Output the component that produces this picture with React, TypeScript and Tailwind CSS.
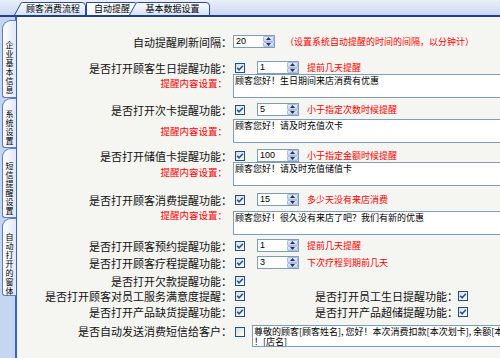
import React from "react";

const cjk = "font-['Noto_Sans_CJK_SC','Noto_Sans',sans-serif]";

function TopTab({
  w,
  label,
  slant,
  selected,
  id,
  className = "",
}: {
  w: number;
  label: string;
  slant: boolean;
  selected?: boolean;
  id: string;
  className?: string;
}) {
  const d = slant
    ? `M0.5 13 L7 1.2 Q7.6 0.5 8.6 0.5 L${w - 4} 0.5 Q${w - 0.5} 0.5 ${w - 0.5} 4 L${w - 0.5} 13`
    : `M0.5 13 L0.5 0.5 L${w - 4} 0.5 Q${w - 0.5} 0.5 ${w - 0.5} 4 L${w - 0.5} 13`;
  return (
    <div className={`relative h-[13px] shrink-0 ${className}`} style={{ width: w }}>
      <svg className="absolute inset-0" width={w} height={13} viewBox={`0 0 ${w} 13`}>
        <defs>
          <linearGradient id={id} x1="0" y1="0" x2="0" y2="1">
            <stop offset="0" stopColor={selected ? "#ffffff" : "#fbfcff"} />
            <stop offset="1" stopColor={selected ? "#f3f6fc" : "#d7e2f4"} />
          </linearGradient>
        </defs>
        <path d={d} fill={`url(#${id})`} stroke="#2b4a98" strokeWidth="1" />
      </svg>
      <div
        className={`relative flex h-full items-center justify-center text-[9px] leading-[13px] text-black ${
          slant ? "pl-[6px]" : ""
        }`}
      >
        {label}
      </div>
    </div>
  );
}

function LeftTab({ label, h, pt }: { label: string; h: number; pt: number }) {
  return (
    <div
      className="ml-[2px] flex w-[14px] shrink-0 flex-col items-center rounded-tl-[9px] rounded-bl-[3px] border-y border-l border-[#5b7ec6] bg-gradient-to-r from-[#ffffff] to-[#dfe8f7]"
      style={{ height: h, paddingTop: pt }}
    >
      <span className="block w-[9px] break-all text-center text-[8px] leading-[9px] text-black">{label}</span>
    </div>
  );
}

function Label({ children, className = "" }: { children: React.ReactNode; className?: string }) {
  return (
    <div className={`w-[215px] shrink-0 whitespace-nowrap text-right text-[11px] leading-[14px] text-[#111] ${className}`}>
      {children}
    </div>
  );
}

function RightLabel({ children }: { children: React.ReactNode }) {
  return (
    <div className="ml-[63px] w-[150px] shrink-0 whitespace-nowrap text-right text-[11px] leading-[14px] text-[#111]">
      {children}
    </div>
  );
}

function RedLabel({ className = "" }: { className?: string }) {
  return (
    <div
      className={`w-[215px] shrink-0 whitespace-nowrap pr-[5px] text-right text-[9.5px] leading-[12px] text-[#ff0000] ${className}`}
    >
      提醒内容设置：
    </div>
  );
}

function Note({ children, className = "" }: { children: React.ReactNode; className?: string }) {
  return <div className={`whitespace-nowrap text-[9px] leading-[12px] text-[#ff0000] ${className}`}>{children}</div>;
}

function Check({ on = true, className = "" }: { on?: boolean; className?: string }) {
  return (
    <div
      className={`flex h-[10px] w-[10px] shrink-0 items-center justify-center border border-[#1c5180] bg-gradient-to-br from-[#dcdcd7] to-[#ffffff] ${className}`}
    >
      {on && (
        <svg width="8" height="8" viewBox="0 0 8 8">
          <path d="M1.2 3.8 L3.1 5.8 L6.9 1.8" stroke="#2450a8" strokeWidth="1.6" fill="none" />
        </svg>
      )}
    </div>
  );
}

function Arrow({ up }: { up?: boolean }) {
  return (
    <div className="flex flex-1 items-center justify-center rounded-[1px] border border-[#aabde8] bg-gradient-to-b from-[#e4ecfd] to-[#c3d3f6]">
      <svg width="5" height="3" viewBox="0 0 5 3">
        <path d={up ? "M0 3 L2.5 0 L5 3 Z" : "M0 0 L2.5 3 L5 0 Z"} fill="#333" />
      </svg>
    </div>
  );
}

function Spin({ v, className = "" }: { v: string; className?: string }) {
  return (
    <div className={`flex h-[13px] w-[42px] shrink-0 border border-[#7f9db9] bg-white ${className}`}>
      <div className="flex-1 pl-[2px] font-['Liberation_Sans',sans-serif] text-[9px] leading-[11px] text-black">
        {v}
      </div>
      <div className="flex w-[11px] flex-col">
        <Arrow up />
        <Arrow />
      </div>
    </div>
  );
}

function Box({ children, h = 24, className = "" }: { children: React.ReactNode; h?: number; className?: string }) {
  return (
    <div
      className={`w-[320px] shrink-0 overflow-hidden border border-[#7f9db9] bg-white px-[1px] pt-[1px] text-[9px] leading-[10px] text-black ${className}`}
      style={{ height: h }}
    >
      {children}
    </div>
  );
}

export default function App() {
  return (
    <div className={`flex h-[358px] w-[500px] flex-col overflow-hidden bg-[#f5f5f2] ${cjk}`}>
      {/* top tab strip */}
      <div className="flex h-[17px] shrink-0 items-end border-b-2 border-[#23408f] bg-gradient-to-b from-[#eaf0fa] to-[#c9d8f0] pl-[14px]">
        <TopTab id="t1" w={72} label="顾客消费流程" slant />
        <TopTab id="t2" w={52} label="自动提醒" slant={false} selected />
        <TopTab id="t3" w={81} label="基本数据设置" slant className="-ml-[9px]" />
      </div>

      <div className="flex min-h-0 flex-1">
        {/* left vertical tabs */}
        <div className="flex w-[17px] shrink-0 flex-col border-r-2 border-[#3a64bf] bg-[#c5d6f2] pt-[3px]">
          <LeftTab label="企业基本信息" h={78} pt={19} />
          <LeftTab label="系统设置" h={50} pt={10} />
          <LeftTab label="短信提醒设置" h={70} pt={12} />
          <LeftTab label="自动打开的窗体" h={78} pt={13} />
        </div>

        {/* settings */}
        <div className="min-w-0 flex-1 overflow-hidden pt-[18px]">
          <div className="flex h-[13px] items-center">
            <Label>自动提醒刷新间隔：</Label>
            <Spin v="20" className="ml-[1px]" />
            <Note className="ml-[10px]">（设置系统自动提醒的时间的间隔，以分钟计）</Note>
          </div>

          <div className="mt-[13px] flex h-[13px] items-center">
            <Label>是否打开顾客生日提醒功能：</Label>
            <Check className="ml-[3px]" />
            <Spin v="1" className="ml-[12px]" />
            <Note className="ml-[8px]">提前几天提醒</Note>
          </div>
          <div className="flex items-start">
            <RedLabel className="pt-[3px]" />
            <Box className="ml-[1px]">顾客您好！生日期间来店消费有优惠</Box>
          </div>

          <div className="mt-[5px] flex h-[13px] items-center">
            <Label>是否打开次卡提醒功能：</Label>
            <Check className="ml-[3px]" />
            <Spin v="5" className="ml-[12px]" />
            <Note className="ml-[8px]">小于指定次数时候提醒</Note>
          </div>
          <div className="mt-[3px] flex items-start">
            <RedLabel className="pt-[6px]" />
            <Box className="ml-[1px]">顾客您好！请及时充值次卡</Box>
          </div>

          <div className="mt-[6px] flex h-[13px] items-center">
            <Label>是否打开储值卡提醒功能：</Label>
            <Check className="ml-[3px]" />
            <Spin v="100" className="ml-[12px]" />
            <Note className="ml-[8px]">小于指定金额时候提醒</Note>
          </div>
          <div className="flex items-start">
            <RedLabel className="pt-[4px]" />
            <Box className="ml-[1px]">顾客您好！请及时充值储值卡</Box>
          </div>

          <div className="mt-[7px] flex h-[13px] items-center">
            <Label>是否打开顾客消费提醒功能：</Label>
            <Check className="ml-[3px]" />
            <Spin v="15" className="ml-[12px]" />
            <Note className="ml-[8px]">多少天没有来店消费</Note>
          </div>
          <div className="mt-[5px] flex items-start">
            <RedLabel className="-mt-[2px]" />
            <Box className="ml-[1px]">顾客您好！很久没有来店了吧？我们有新的优惠</Box>
          </div>

          <div className="mt-[4px] flex h-[13px] items-center">
            <Label>是否打开顾客预约提醒功能：</Label>
            <Check className="ml-[3px]" />
            <Spin v="1" className="ml-[12px]" />
            <Note className="ml-[8px]">提前几天提醒</Note>
          </div>
          <div className="mt-[4px] flex h-[13px] items-center">
            <Label>是否打开顾客疗程提醒功能：</Label>
            <Check className="ml-[3px]" />
            <Spin v="3" className="ml-[12px]" />
            <Note className="ml-[8px]">下次疗程到期前几天</Note>
          </div>

          <div className="mt-[5px] flex h-[14px] items-center">
            <Label>是否打开欠款提醒功能：</Label>
            <Check className="ml-[3px]" />
          </div>
          <div className="mt-[1px] flex h-[14px] items-center">
            <Label>是否打开顾客对员工服务满意度提醒：</Label>
            <Check className="ml-[3px]" />
            <RightLabel>是否打开员工生日提醒功能：</RightLabel>
            <Check />
          </div>
          <div className="mt-[2px] flex h-[14px] items-center">
            <Label>是否打开产品缺货提醒功能：</Label>
            <Check className="ml-[3px]" />
            <RightLabel>是否打开产品超储提醒功能：</RightLabel>
            <Check />
          </div>

          <div className="mt-[6px] flex items-start">
            <Label className="-mt-[1px]">是否自动发送消费短信给客户：</Label>
            <Check on={false} className="ml-[3px] mt-[2px]" />
            <Box h={22} className="ml-[7px] w-[330px]">
              <div className="whitespace-pre">
                {"尊敬的顾客[顾客姓名], 您好！本次消费扣款[本次划卡], 余额[本次余额]\n！[店名]"}
              </div>
            </Box>
          </div>
        </div>
      </div>
    </div>
  );
}
